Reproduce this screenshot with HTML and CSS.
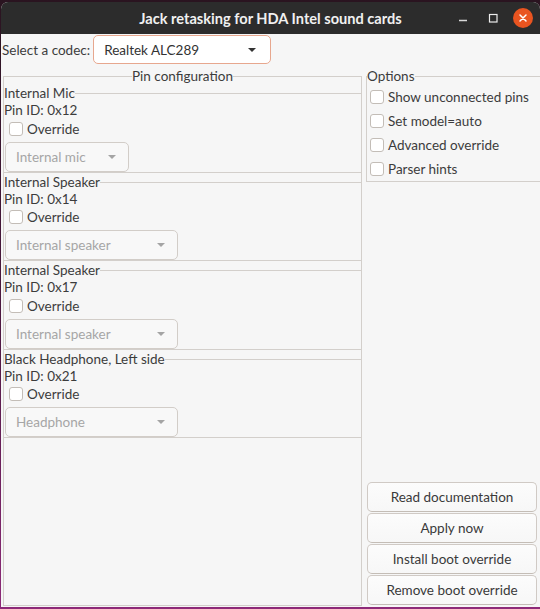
FILE: index.html
```html
<!DOCTYPE html>
<html>
<head>
<meta charset="utf-8">
<title>Jack retasking for HDA Intel sound cards</title>
<link rel="stylesheet" href="styles.css">
</head>
<body>
<div class="window">
  <header class="titlebar">
    <div class="title">Jack retasking for HDA Intel sound cards</div>
    <div class="controls">
      <span class="ctl"><svg width="12" height="12" viewBox="0 0 12 12"><path d="M2 8.5H10" stroke="#d8d8d8" stroke-width="1.4"/></svg></span>
      <span class="ctl"><svg width="12" height="12" viewBox="0 0 12 12"><rect x="2.5" y="2.5" width="7.5" height="7.5" fill="none" stroke="#ececec" stroke-width="1.2"/></svg></span>
      <span class="ctl close"><svg width="10" height="10" viewBox="0 0 10 10"><path d="M2 2L8 8M8 2L2 8" stroke="#fff" stroke-width="1.5" stroke-linecap="round"/></svg></span>
    </div>
  </header>
  <main class="content">
    <div class="codec-row">
      <span class="codec-label">Select a codec:</span>
      <div class="combo combo-focus">
        <span>Realtek ALC289</span>
        <svg class="arrow" width="8" height="4" viewBox="0 0 8 4"><path d="M0 0H8L4 4Z" fill="#333"/></svg>
      </div>
    </div>
    <div class="columns">
      <fieldset class="frame pins">
        <legend class="legend-center">Pin configuration</legend>

        <fieldset class="frame pin">
          <legend>Internal Mic</legend>
          <div class="pinid">Pin ID: 0x12</div>
          <label class="check pin-check"><span class="box"></span>Override</label>
          <div class="combo combo-disabled combo-narrow">
            <span>Internal mic</span>
            <svg class="arrow" width="8" height="4" viewBox="0 0 8 4"><path d="M0 0H8L4 4Z" fill="#a4a4a4"/></svg>
          </div>
        </fieldset>

        <fieldset class="frame pin">
          <legend>Internal Speaker</legend>
          <div class="pinid">Pin ID: 0x14</div>
          <label class="check pin-check"><span class="box"></span>Override</label>
          <div class="combo combo-disabled combo-wide">
            <span>Internal speaker</span>
            <svg class="arrow" width="8" height="4" viewBox="0 0 8 4"><path d="M0 0H8L4 4Z" fill="#a4a4a4"/></svg>
          </div>
        </fieldset>

        <fieldset class="frame pin">
          <legend>Internal Speaker</legend>
          <div class="pinid">Pin ID: 0x17</div>
          <label class="check pin-check"><span class="box"></span>Override</label>
          <div class="combo combo-disabled combo-wide">
            <span>Internal speaker</span>
            <svg class="arrow" width="8" height="4" viewBox="0 0 8 4"><path d="M0 0H8L4 4Z" fill="#a4a4a4"/></svg>
          </div>
        </fieldset>

        <fieldset class="frame pin">
          <legend>Black Headphone, Left side</legend>
          <div class="pinid">Pin ID: 0x21</div>
          <label class="check pin-check"><span class="box"></span>Override</label>
          <div class="combo combo-disabled combo-wide">
            <span>Headphone</span>
            <svg class="arrow" width="8" height="4" viewBox="0 0 8 4"><path d="M0 0H8L4 4Z" fill="#a4a4a4"/></svg>
          </div>
        </fieldset>
      </fieldset>

      <div class="side">
        <fieldset class="frame options">
          <legend>Options</legend>
          <label class="check opt-check"><span class="box"></span>Show unconnected pins</label>
          <label class="check opt-check"><span class="box"></span>Set model=auto</label>
          <label class="check opt-check"><span class="box"></span>Advanced override</label>
          <label class="check opt-check"><span class="box"></span>Parser hints</label>
        </fieldset>
        <div class="buttons">
          <div class="btn">Read documentation</div>
          <div class="btn">Apply now</div>
          <div class="btn">Install boot override</div>
          <div class="btn">Remove boot override</div>
        </div>
      </div>
    </div>
  </main>
</div>
</body>
</html>
```
FILE: styles.css
```css
* { box-sizing: border-box; }
html, body { margin: 0; padding: 0; }
body {
  width: 540px;
  height: 609px;
  overflow: hidden;
  background: linear-gradient(180deg, #2a1420 0%, #4f1842 55%, #8d2a78 100%);
  font-family: Lato, "Liberation Sans", sans-serif;
  font-size: 13.5px;
  color: #3c3c3c;
}
.window {
  margin: 2px 0 0 1px;
  width: 539px;
  height: 605px;
  background: #f6f6f6;
  border-radius: 7px 7px 0 0;
  overflow: hidden;
  display: flex;
  flex-direction: column;
}
.titlebar {
  flex: none;
  height: 32px;
  background: #2c2c2c;
  display: grid;
  grid-template-columns: 1fr auto 1fr;
  align-items: center;
  color: #f0f0f0;
}
.title {
  grid-column: 2;
  font-weight: 700;
  font-size: 14.6px;
  white-space: nowrap;
}
.controls {
  grid-column: 3;
  justify-self: end;
  display: flex;
  align-items: center;
  gap: 10px;
  padding-right: 7px;
}
.ctl {
  width: 20px;
  height: 20px;
  display: flex;
  align-items: center;
  justify-content: center;
}
.ctl.close {
  width: 20px;
  height: 20px;
  background: #e95420;
  border-radius: 50%;
}
.content {
  flex: 1;
  display: flex;
  flex-direction: column;
  padding: 1px 0 1px 0;
  min-height: 0;
}
.codec-row {
  flex: none;
  display: flex;
  align-items: center;
  gap: 3px;
  height: 29px;
}
.codec-label { padding-left: 1px; }
.combo {
  display: flex;
  align-items: center;
  justify-content: space-between;
  border: 1px solid #d2cdc8;
  border-radius: 5px;
  padding: 0 12px 0 10px;
  white-space: nowrap;
}
.combo-focus {
  width: 178px;
  height: 29px;
  background: #ffffff;
  border-color: #e7a78e;
  color: #333;
  padding-right: 14px;
}
.combo-disabled {
  height: 30px;
  margin: 3px 0 0 1px;
  background: #f8f8f8;
  color: #a6a6a6;
}
.combo-narrow { width: 124px; }
.combo-wide { width: 173px; }
.columns {
  flex: 1;
  display: flex;
  margin-top: 4px;
  min-height: 0;
}
.frame {
  margin: 0;
  padding: 0;
  border: 1px solid #d3cfcb;
  min-width: 0;
}
.frame legend {
  padding: 0;
  line-height: 17px;
}
.legend-center { margin: 0 auto; }
.pins {
  flex: none;
  width: 359px;
  margin: 0 4px 0 2px;
}
.pin {
  border-left: none;
  border-right: none;
  margin-bottom: 1px;
}
.pinid { line-height: 16.5px; }
.check {
  display: flex;
  align-items: center;
  gap: 4px;
}
.box {
  width: 14px;
  height: 14px;
  border: 1px solid #c3bdb7;
  border-radius: 3px;
  background: #ffffff;
  flex: none;
}
.pin-check {
  height: 20px;
  padding-left: 5px;
}
.side {
  flex: 1;
  display: flex;
  flex-direction: column;
  justify-content: space-between;
}
.options {
  border-right: none;
}
.opt-check {
  height: 24px;
  padding-left: 3px;
}
.buttons {
  display: flex;
  flex-direction: column;
  gap: 1px;
  margin: 0 3px 1px 1px;
}
.btn {
  height: 30px;
  display: flex;
  align-items: center;
  justify-content: center;
  border: 1px solid #d0cac5;
  border-bottom-color: #c4bdb6;
  border-radius: 5px;
  background: linear-gradient(#fcfcfc, #f7f7f7);
  color: #3a3a3a;
}
```
